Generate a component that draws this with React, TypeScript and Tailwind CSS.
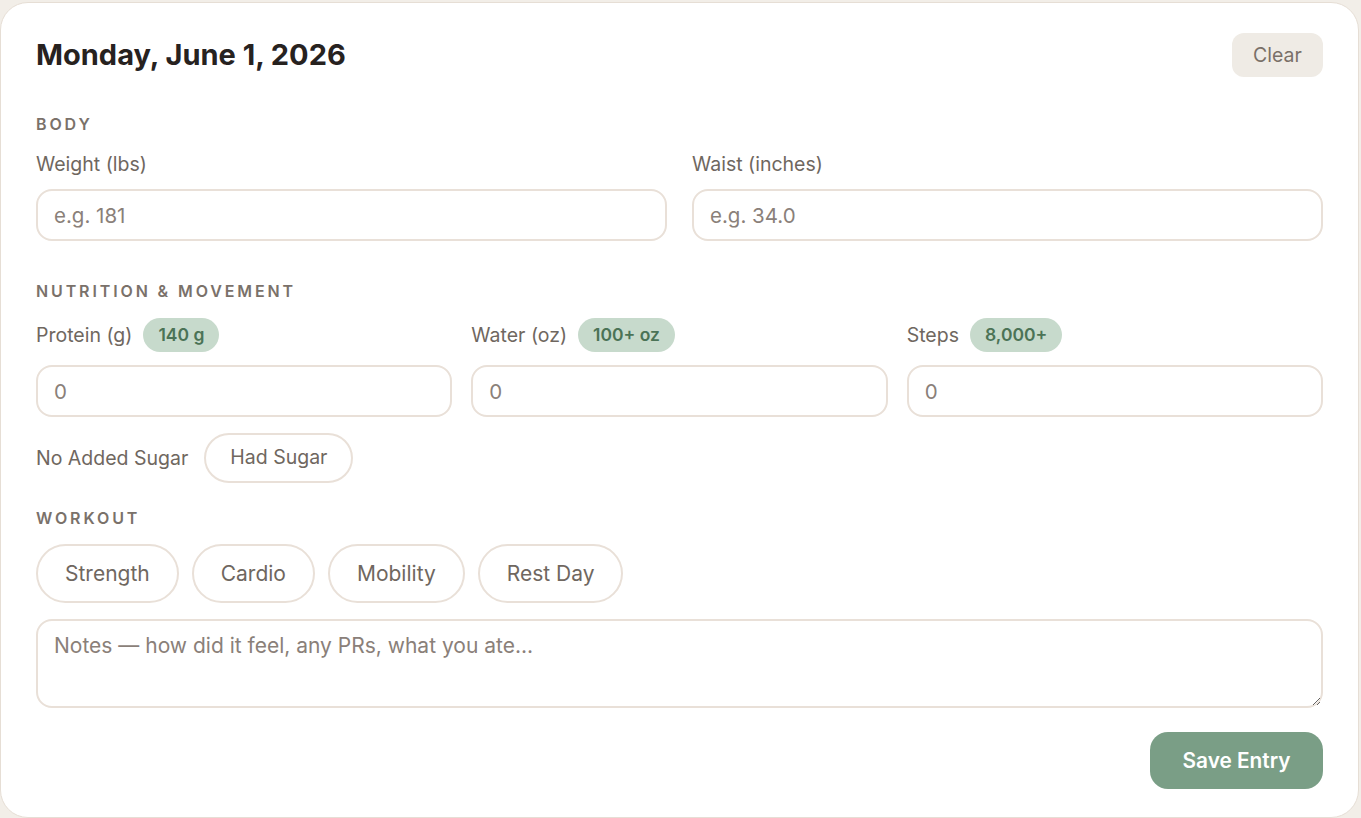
import React from "react";

const sectionLabel =
	"text-[16px] leading-5 font-semibold tracking-[0.18em] text-[#7a716a] uppercase";
const fieldLabel = "text-[19.5px] leading-6 text-[#6f6760]";
const inputCls =
	"w-full h-[52px] rounded-2xl border-2 border-[#e9e0d8] bg-white px-[16px] text-[20.5px] text-[#3a332e] placeholder:text-[#8a8079] outline-none";

function Goal({ children }: { children: React.ReactNode }) {
	return (
		<span className="inline-flex h-[34px] items-center rounded-full bg-[#c7dacc] px-[15px] text-[17.5px] font-semibold text-[#4b7356]">
			{children}
		</span>
	);
}

function Pill({ children, big }: { children: React.ReactNode; big?: boolean }) {
	return (
		<button
			className={
				big
					? "h-[59px] rounded-full border-2 border-[#e9e0d8] bg-white px-[27px] text-[21px] text-[#6f6760]"
					: "h-[50px] rounded-full border-2 border-[#e9e0d8] bg-white px-[24px] text-[19.5px] text-[#6f6760]"
			}
		>
			{children}
		</button>
	);
}

export default function App() {
	return (
		<div
			className="min-h-screen bg-[#f2eee8] pt-[2px] pr-[2px]"
			style={{ fontFamily: "Inter, 'Noto Sans', sans-serif" }}
		>
			<div className="flex h-[816px] flex-col rounded-[28px] border border-[#e6ded5] bg-white px-[35px] pt-[30px]">
				{/* header */}
				<div className="flex h-[44px] items-center justify-between">
					<h1 className="text-[29px] font-bold text-[#27221f]">
						Monday, June 1, 2026
					</h1>
					<button className="h-[44px] w-[91px] rounded-xl bg-[#efebe5] pt-px text-[19.5px] text-[#7a7068]">
						Clear
					</button>
				</div>

				{/* body */}
				<div className={`${sectionLabel} mt-[37px]`}>Body</div>
				<div className="mt-[18px] grid grid-cols-2 gap-x-[25px]">
					<div>
						<div className={fieldLabel}>Weight (lbs)</div>
						<input className={`${inputCls} mt-[13px]`} placeholder="e.g. 181" />
					</div>
					<div>
						<div className={fieldLabel}>Waist (inches)</div>
						<input className={`${inputCls} mt-[13px]`} placeholder="e.g. 34.0" />
					</div>
				</div>

				{/* nutrition */}
				<div className={`${sectionLabel} mt-[40px]`}>Nutrition &amp; Movement</div>
				<div className="mt-[17px] grid grid-cols-3 gap-x-[19px]">
					{[
						["Protein (g)", "140 g"],
						["Water (oz)", "100+ oz"],
						["Steps", "8,000+"],
					].map(([label, goal]) => (
						<div key={label}>
							<div className="flex items-center gap-[11px]">
								<span className={fieldLabel}>{label}</span>
								<Goal>{goal}</Goal>
							</div>
							<input
								className={`${inputCls} mt-[13px] h-[51px] text-[#6f6760] placeholder:text-[#6f6760]`}
								placeholder="0"
							/>
						</div>
					))}
				</div>
				<div className="mt-[16px] flex items-center gap-[16px]">
					<span className={fieldLabel}>No Added Sugar</span>
					<Pill>Had Sugar</Pill>
				</div>

				{/* workout */}
				<div className={`${sectionLabel} mt-[25px]`}>Workout</div>
				<div className="mt-[16px] flex gap-[13px]">
					<Pill big>Strength</Pill>
					<Pill big>Cardio</Pill>
					<Pill big>Mobility</Pill>
					<Pill big>Rest Day</Pill>
				</div>
				<textarea
					className="mt-[16px] h-[89px] w-full rounded-2xl border-2 border-[#e9e0d8] px-[16px] py-[9px] text-[21px] text-[#3a332e] placeholder:text-[#8a8079] outline-none"
					placeholder="Notes — how did it feel, any PRs, what you ate..."
				/>
				<div className="mt-[24px] flex justify-end">
					<button className="h-[57px] w-[173px] rounded-[18px] bg-[#7a9e86] text-[20.8px] font-semibold text-white">
						Save Entry
					</button>
				</div>
			</div>
		</div>
	);
}
